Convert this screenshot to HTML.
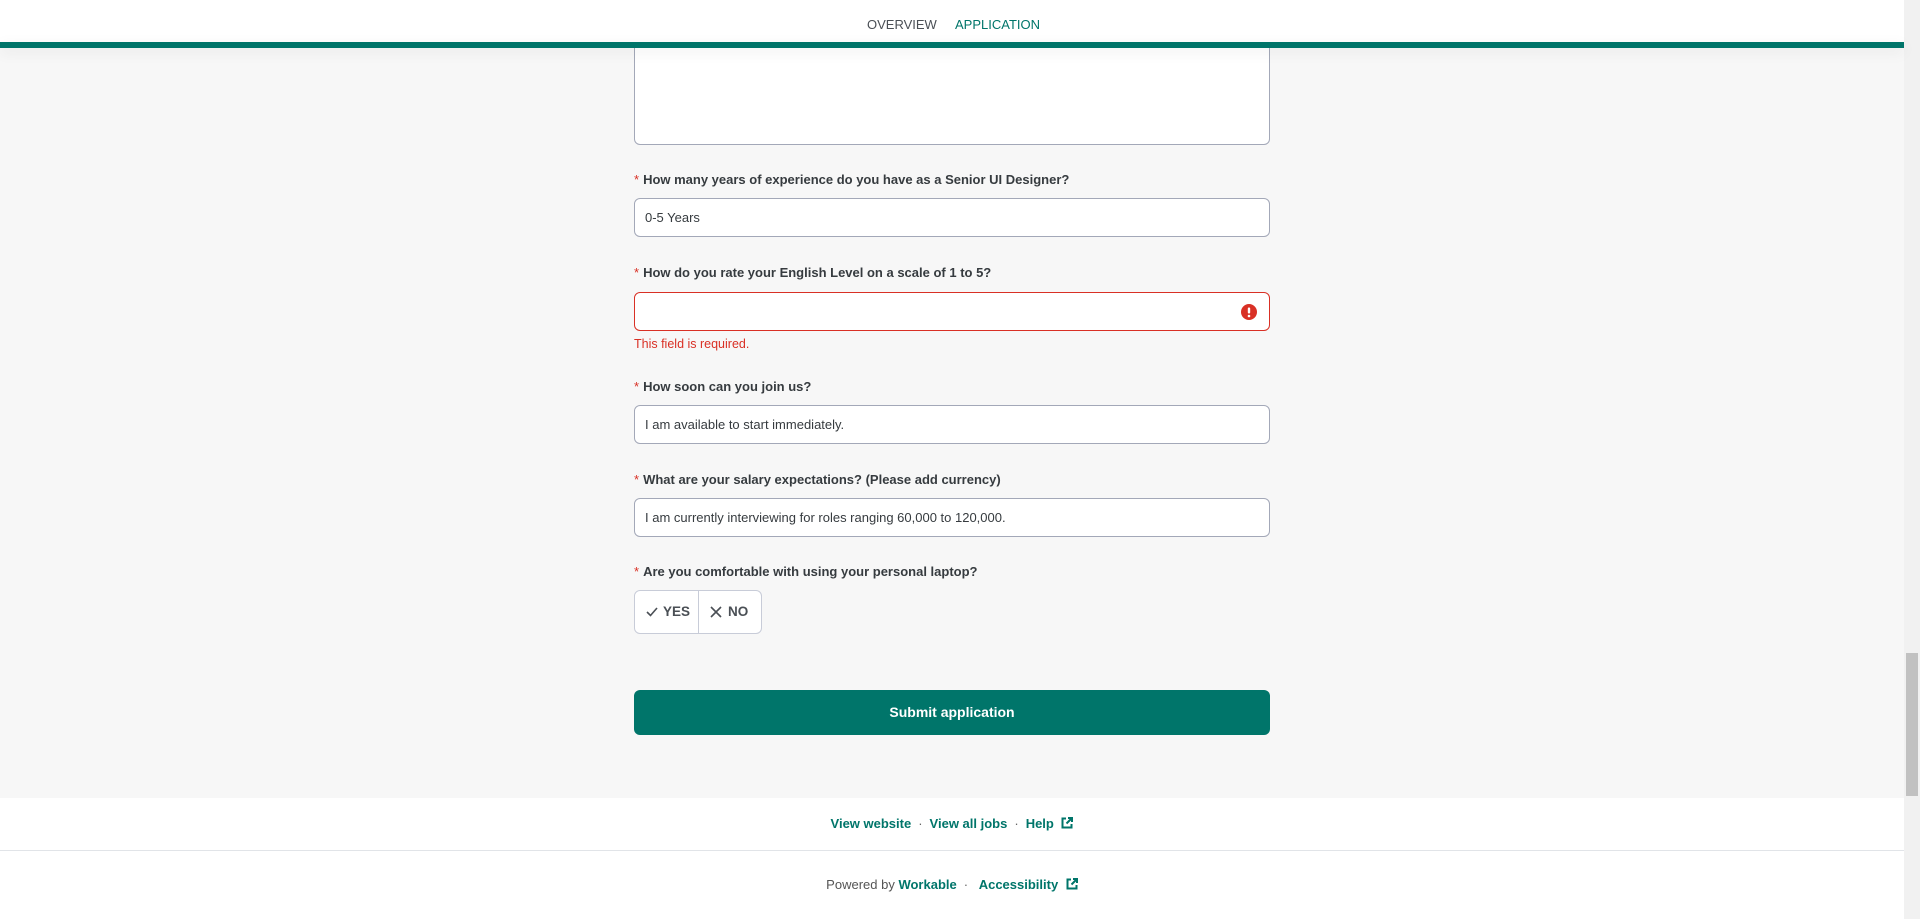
<!DOCTYPE html>
<html><head><meta charset="utf-8"><style>
*{box-sizing:border-box;margin:0;padding:0}
html,body{width:1920px;height:919px;overflow:hidden}
body{background:#f7f7f7;font-family:"Liberation Sans",Arial,sans-serif;color:#363b3f;position:relative}
.hdr{position:absolute;left:0;top:0;width:1904px;height:42px;background:#fff;z-index:5}
.bar{position:absolute;left:0;top:42px;width:1904px;height:6px;background:#00756a;z-index:5;box-shadow:0 4px 14px rgba(0,0,0,.08)}
.nav{position:absolute;top:17px;font-size:13px}
.ta{position:absolute;left:634px;top:20px;width:636px;height:125px;background:#fff;border:1px solid #a3a8b8;border-radius:6px}
.lbl{position:absolute;left:634px;font-size:13px;font-weight:bold;color:#363b3f;line-height:16px}
.lbl span{color:#d93025;font-weight:normal;margin-right:4px}
.in{position:absolute;left:634px;width:636px;height:39px;background:#fff;border:1px solid #a3a8b8;border-radius:6px;font-size:13px;padding:0 10px;line-height:37px;color:#363b3f}
.err{border-color:#d93025}
.sub{position:absolute;left:634px;top:690px;width:636px;height:45px;background:#00756a;border-radius:6px;color:#fff;font-weight:bold;font-size:14px;text-align:center;line-height:45px}
.tg{position:absolute;left:634px;top:590px;width:128px;height:44px;border:1px solid #c8ccd8;border-radius:6px;background:#fff;font-size:13.5px;font-weight:bold;color:#4a4f55}
.foot{position:absolute;left:0;top:798px;width:1904px;height:121px;background:#fff}
.fl{position:absolute;width:100%;text-align:center;font-size:13px;color:#00756a}
.fl b{font-weight:bold}
.dot{color:#666;margin:0 7px}
.sb{position:absolute;left:1904px;top:0;width:16px;height:919px;background:#f1f1f1}
.th{position:absolute;left:1906px;top:653px;width:12px;height:143px;background:#c1c1c1}
</style></head><body>
<div class="hdr">
<div class="nav" style="left:867px;color:#4a4f55">OVERVIEW</div>
<div class="nav" style="left:955px;color:#00756a">APPLICATION</div>
</div>
<div class="bar"></div>
<div class="ta"></div>

<div class="lbl" style="top:172px"><span>*</span>How many years of experience do you have as a Senior UI Designer?</div>
<div class="in" style="top:198px">0-5 Years</div>

<div class="lbl" style="top:265px"><span>*</span>How do you rate your English Level on a scale of 1 to 5?</div>
<div class="in err" style="top:292px"><svg style="position:absolute;right:12px;top:11px" width="16" height="16" viewBox="0 0 16 16"><circle cx="8" cy="8" r="8" fill="#d93025"/><rect x="6.8" y="3.5" width="2.4" height="6" rx="1" fill="#fff"/><circle cx="8" cy="12" r="1.3" fill="#fff"/></svg></div>
<div style="position:absolute;left:634px;top:337px;font-size:12.5px;color:#d93025">This field is required.</div>

<div class="lbl" style="top:379px"><span>*</span>How soon can you join us?</div>
<div class="in" style="top:405px">I am available to start immediately.</div>

<div class="lbl" style="top:472px"><span>*</span>What are your salary expectations? (Please add currency)</div>
<div class="in" style="top:498px">I am currently interviewing for roles ranging 60,000 to 120,000.</div>

<div class="lbl" style="top:564px"><span>*</span>Are you comfortable with using your personal laptop?</div>
<div class="tg">
<div style="position:absolute;left:63px;top:0;width:1px;height:42px;background:#c8ccd8"></div>
<svg style="position:absolute;left:11px;top:16px" width="12" height="10" viewBox="0 0 12 10"><path d="M1 5l3.5 3.5L11 1" stroke="#4a4f55" stroke-width="1.6" fill="none"/></svg>
<div style="position:absolute;left:28px;top:13px">YES</div>
<svg style="position:absolute;left:75px;top:15px" width="12" height="12" viewBox="0 0 12 12"><path d="M1 1l10 10M11 1L1 11" stroke="#4a4f55" stroke-width="1.6"/></svg>
<div style="position:absolute;left:93px;top:13px">NO</div>
</div>

<div class="sub">Submit application</div>

<div class="foot">
<div class="fl" style="top:18px"><b>View website</b><span class="dot">·</span><b>View all jobs</b><span class="dot">·</span><b>Help</b> <svg width="12" height="12" viewBox="0 0 12 12" style="margin-left:4px;vertical-align:-1px"><path d="M5 1.5H1.5v9h9V7" stroke="#00756a" stroke-width="2" fill="none"/><path d="M7 1h4v4M11 1L5.5 6.5" stroke="#00756a" stroke-width="2" fill="none"/></svg></div>
<div style="position:absolute;left:0;top:52px;width:100%;height:1px;background:#e1e4e8"></div>
<div class="fl" style="top:79px"><span style="color:#555">Powered by</span> <b>Workable</b><span class="dot">·</span> <b>Accessibility</b> <svg width="12" height="12" viewBox="0 0 12 12" style="margin-left:4px;vertical-align:-1px"><path d="M5 1.5H1.5v9h9V7" stroke="#00756a" stroke-width="2" fill="none"/><path d="M7 1h4v4M11 1L5.5 6.5" stroke="#00756a" stroke-width="2" fill="none"/></svg></div>
</div>
<div class="sb"></div><div class="th"></div>
</body></html>
